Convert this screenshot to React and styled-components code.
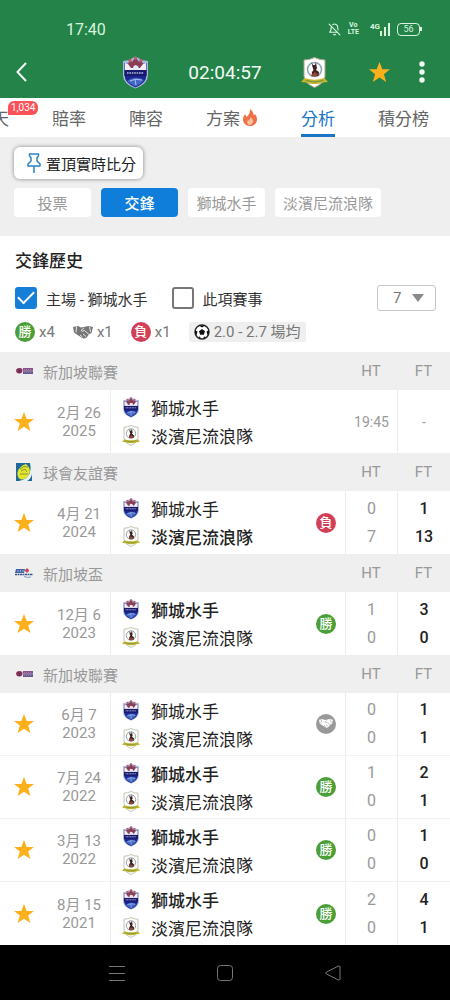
import { LuBellOff } from "react-icons/lu";
import styled, { createGlobalStyle } from "styled-components";

const GlobalStyle = createGlobalStyle`
  * {
    box-sizing: border-box;
  }
  body {
    margin: 0;
    background: white;
    font-family: Roboto, "Noto Sans CJK TC", sans-serif;
    font-size: 15px;
    color: #222;
  }
  button, select, input {
    font: inherit;
    color: inherit;
    margin: 0;
    padding: 0;
    border: none;
    background: none;
  }
  button {
    cursor: pointer;
  }
  svg {
    display: block;
    flex-shrink: 0;
  }
`

const Page = styled.div`
  display: flex;
  flex-direction: column;
  min-height: 100vh;
`

const Header = styled.header`
  background: #238349;
  color: #f3fbf5;
`

const StatusBar = styled.div`
  display: flex;
  align-items: center;
  justify-content: space-between;
  height: 46px;
  padding: 12px 28px 0 66px;
  font-size: 16px;
  color: #d9f5df;
`

const StatusIcons = styled.div`
  display: flex;
  align-items: center;
  gap: 7px;
`

const Volte = styled.span`
  display: flex;
  flex-direction: column;
  align-items: center;
  font-size: 7px;
  line-height: 7px;
  font-weight: 700;
`

const Signal = styled.span`
  display: flex;
  align-items: flex-start;
  padding-left: 4px;
  font-size: 8px;
  line-height: 7px;
  font-weight: 700;
`

const Bars = styled.span`
  display: flex;
  align-items: flex-end;
  gap: 2px;
  height: 13px;
`

const Bar = styled.i`
  width: 2px;
  height: ${({ $height }) => $height}px;
  background: currentColor;
`

const Battery = styled.span`
  display: flex;
  align-items: center;
  &::after {
    content: "";
    width: 2px;
    height: 4px;
    background: currentColor;
  }
`

const BatteryLevel = styled.span`
  width: 23px;
  height: 13px;
  border: 1px solid currentColor;
  border-radius: 4px;
  font-size: 9px;
  line-height: 11px;
  text-align: center;
`

const AppBar = styled.div`
  display: grid;
  grid-template-columns: 1fr auto 1fr;
  align-items: center;
  column-gap: 39px;
  height: 52px;
  padding: 0 16px;
`

const BarSide = styled.div`
  display: flex;
  align-items: center;
  justify-content: space-between;
`

const BarActions = styled.div`
  display: flex;
  gap: 19px;
`

const IconButton = styled.button`
  display: flex;
  align-items: center;
  justify-content: center;
  width: ${({ $narrow }) => ($narrow ? "12px" : "24px")};
  height: 24px;
`

const Clock = styled.div`
  font-size: 19px;
`

const Tabs = styled.nav`
  display: flex;
  justify-content: flex-end;
  gap: 43px;
  height: 39px;
  padding-right: 21px;
  overflow: hidden;
  background: white;
`

const Tab = styled.button`
  display: flex;
  align-items: center;
  gap: 2px;
  flex-shrink: 0;
  position: relative;
  font-size: 17px;
  padding-top: 3px;
  border-bottom: 3px solid ${({ $active }) => ($active ? "#1c75c4" : "transparent")};
  color: ${({ $active }) => ($active ? "#1c75c4" : "#666")};
`

const Count = styled.span`
  position: absolute;
  top: 3px;
  left: 33px;
  height: 14px;
  padding: 0 3px;
  border-radius: 6px 6px 6px 0;
  background: #fb5158;
  color: white;
  font-size: 10px;
  line-height: 14px;
`

const Filters = styled.section`
  display: flex;
  flex-direction: column;
  align-items: flex-start;
  gap: 9px;
  padding: 10px 14px 19px;
  background: #efefef;
`

const PinButton = styled.button`
  display: flex;
  align-items: center;
  gap: 5px;
  height: 32px;
  padding: 0 7px 0 13px;
  border-radius: 6px;
  background: white;
  box-shadow: 0 0 4px rgb(0 0 0 / 45%);
`

const Chips = styled.div`
  display: flex;
  gap: 10px;
`

const Chip = styled.button`
  min-width: 77px;
  height: 29px;
  padding: 0 8px;
  border-radius: 4px;
  background: ${({ $active }) => ($active ? "#0f7edb" : "white")};
  color: ${({ $active }) => ($active ? "white" : "#999")};
  font-weight: ${({ $active }) => ($active ? 500 : 400)};
`

const Summary = styled.section`
  padding: 14px 14px 10px 15px;
`

const Title = styled.h2`
  margin: 0 0 13px;
  font-size: 17px;
  line-height: 22px;
  font-weight: 500;
`

const Options = styled.div`
  display: flex;
  align-items: center;
  gap: 24px;
  height: 26px;
  margin-bottom: 11px;
`

const CheckLabel = styled.label`
  display: flex;
  align-items: center;
  gap: 9px;
  color: #333;
`

const Checkbox = styled.input`
  appearance: none;
  display: grid;
  place-items: center;
  width: 22px;
  height: 22px;
  border: 2px solid #777;
  border-radius: 3px;
  &:checked {
    border-color: #157fd8;
    background: #157fd8;
  }
  &:checked::after {
    content: "";
    width: 14px;
    height: 7px;
    margin-bottom: 5px;
    border-left: 2px solid white;
    border-bottom: 2px solid white;
    transform: rotate(-45deg);
  }
`

const SelectBox = styled.div`
  display: grid;
  grid-template-columns: 1fr 24px;
  align-items: center;
  margin-left: auto;
  width: 59px;
  select {
    grid-area: 1 / 1 / 2 / 3;
    appearance: none;
    height: 26px;
    padding-left: 15px;
    border: 1px solid #c6c6c6;
    border-radius: 3px;
    color: #777;
  }
  svg {
    grid-area: 1 / 2 / 2 / 3;
    pointer-events: none;
  }
`

const Legend = styled.div`
  display: flex;
  align-items: center;
  gap: 18px;
  height: 20px;
  line-height: 20px;
  color: #777;
`

const LegendItem = styled.span`
  display: flex;
  align-items: center;
  gap: 4px;
`

const Average = styled.span`
  display: flex;
  align-items: center;
  gap: 4px;
  height: 20px;
  line-height: 18px;
  padding: 0 5px;
  border-radius: 2px;
  background: #efefef;
`

const badgeColors = {
  win: "#4b9f38",
  loss: "#d23f57",
  draw: "#999",
}

const Badge = styled.span`
  display: inline-flex;
  align-items: center;
  justify-content: center;
  width: 20px;
  height: 20px;
  border-radius: 50%;
  vertical-align: middle;
  background: ${({ $result }) => badgeColors[$result]};
  color: white;
  font-size: 13px;
  line-height: 20px;
  font-weight: 500;
`

const Matches = styled.table`
  width: 100%;
  table-layout: fixed;
  border-spacing: 0;
  td, th {
    padding: 0;
  }
`

const LeagueRow = styled.tr`
  height: 38px;
  background: #efefef;
  color: #999;
  th {
    font-weight: 400;
  }
`

const League = styled.div`
  display: flex;
  align-items: center;
  gap: 9px;
  padding-left: 15px;
`

const MatchRow = styled.tr`
  height: 63px;
  td {
    text-align: center;
    border-bottom: ${({ $last }) => ($last ? "none" : "1px solid #f2f2f2")};
  }
`

const StarButton = styled(IconButton)`
  margin: 0 auto;
`

const DateCell = styled.td`
  line-height: 18px;
  color: #999;
`

const TeamsCell = styled.td`
  && {
    border-left: 1px solid #ececec;
  }
`

const Team = styled.div`
  display: flex;
  align-items: center;
  gap: 11px;
  height: 28px;
  padding-left: 11px;
  font-size: 17px;
  font-weight: ${({ $winner }) => ($winner ? 500 : 400)};
`

const ScoreCell = styled.td`
  font-size: ${({ $small }) => ($small ? "14px" : "16px")};
  font-weight: ${({ $strong }) => ($strong ? 500 : 400)};
  color: ${({ $strong }) => ($strong ? "#222" : "#999")};
  line-height: 28px;
  && {
    border-left: 1px solid ${({ $open }) => ($open ? "transparent" : "#ececec")};
  }
`

const SystemNav = styled.footer`
  display: flex;
  align-items: center;
  justify-content: center;
  gap: 84px;
  height: 55px;
  margin-top: auto;
  background: black;
`

const Star = ({ size = 20 }) => (
  <svg width={size} height={size} viewBox="0 0 20 20" fill="#fcb01c">
    <path d="M10 0l2.700 7H20l-5.800 4.600L16.400 19 10 14.800 3.600 19l2.200-7.400L0 7h7.300z" />
  </svg>
)

const Handshake = ({ width = 20, gap = "white" }) => (
  <svg width={width} height={width * 0.65} viewBox="0 0 20 13">
    <path d="M0 1l5-1 3 1.500L11 1l4-1 5 1-1.500 6-2 1-3 3.500q-2.500 2-5 0L3 8 1 6.500z" fill="currentColor" />
    <path d="M3.500.5L3 6.500M16.500 1l1 5M11 2L8 4.500q1 1.500 3.500 0L16 8.500M10 8l3 2.500M7 9l2.500 2" stroke={gap} strokeWidth=".8" fill="none" />
  </svg>
)

const Ball = () => (
  <svg width="16" height="16" viewBox="0 0 16 16">
    <circle cx="8" cy="8" r="7" fill="white" stroke="#222" strokeWidth="1.400" />
    <path d="M8 5l3 2.200-1.200 3.500H6.200L5 7.200z" fill="#111" />
    <path d="M5 1.500h6L8 3.500zM1 6l2.500 1.500-1 3.500L1 9.500zM15 6l-2.500 1.500 1 3.500L15 9.500zM4 13l2-.5 1 2.500zM12 13l-2-.5L9 15z" fill="#111" />
  </svg>
)

const SailorsCrest = ({ width = 18, height = 21 }) => (
  <svg width={width} height={height} viewBox="0 0 27 33">
    <path d="M1 5l6-1 6.500-3.500L20 4l6 1v14q0 9-12.500 13.500Q1 28 1 19z" fill="#a9b9df" />
    <path d="M2.500 7h22v12q0 8-11 12.500Q2.500 27 2.500 19z" fill="#1c2590" />
    <path d="M3 7l5 1 5 6H3z" fill="#f3edf4" />
    <path d="M24 7l-5 1-5 6h10z" fill="#f3edf4" />
    <path d="M6 8l2-4 2 2 3.500-5L17 6l2-2 2 4-3 4H9z" fill="#8a3f55" />
    <circle cx="8" cy="4.500" r="1.700" fill="#b8606b" />
    <circle cx="13.500" cy="2" r="1.700" fill="#b8606b" />
    <circle cx="19" cy="4.500" r="1.700" fill="#b8606b" />
    <path d="M11 11l2-2 3 1 1 3-3 2-2-1z" fill="#e5eafa" />
    <path d="M2.500 14h22v6h-22z" fill="#171a6b" />
    <path d="M5 17h17" stroke="#b3bae6" strokeWidth="1.500" strokeDasharray="1.600 .8" />
    <path d="M5 25q8-6 17-1l-4 4-4.500 2.500L9 28z" fill="#4468c4" />
    <path d="M8 25q5-3 12-1M13 23l1 6" stroke="#a7c0ef" fill="none" />
  </svg>
)

const RoversCrest = ({ width = 18, height = 21 }) => (
  <svg width={width} height={height} viewBox="0 0 27 31">
    <path d="M3 3q5 0 10.500-2.500Q19 3 24 3v16q0 7-10.500 11.500Q3 26 3 19z" fill="#fdfdf9" stroke="#a9a793" />
    <circle cx="13.500" cy="12.500" r="7" fill="none" stroke="#8fa1b3" strokeWidth="1.500" />
    <path d="M10.500 5l1.500 3h2l1-3 .5 4 .5 2-1 2 3 2-.5 4h-7l.5-4 1.500-2-1-3z" fill="#3d211f" />
    <path d="M11 17l3-2 3 2-1.500 2.500h-4z" fill="#96413a" />
    <path d="M0 25l3.500-4q10 3.500 20 0l3.500 4-5 .5q-8.500 3-17 0z" fill="#c3b52d" />
    <path d="M5 23.500q8.500 3 17 0" stroke="#6b9245" fill="none" />
  </svg>
)

const PremierLogo = () => (
  <svg width="19" height="8" viewBox="0 0 19 8">
    <path d="M1 4q0-3 3.500-3Q8 1 7.500 4 7 7 4 6.500L2 6z" fill="#873458" />
    <path d="M3 2l2 2-1 2" stroke="#51275f" fill="none" />
    <path d="M8 1h10v2.800H8z" fill="#85518a" />
    <path d="M8 4.200h10V7H8z" fill="#62558b" />
    <path d="M9 2.400h8M9 5.600h8" stroke="#c6a9c5" strokeWidth=".5" strokeDasharray="1 1" />
  </svg>
)

const FriendlyLogo = () => (
  <svg width="19" height="20" viewBox="0 0 19 20">
    <path d="M1 1h16v18H1z" fill="#1f6898" />
    <path d="M4 19q14-3 11-18h2v11q-1 5-5 7z" fill="#e9f2f3" />
    <path d="M11 2q5 4 3.500 9-2 6-8.500 6.500-4-1.500-3.500-7Q4 4 11 2z" fill="#e6e52c" />
    <path d="M5 7q4-4 8-2M5 12h8M6 9l4-2 2 3" stroke="#7e9c3d" fill="none" />
  </svg>
)

const CupLogo = () => (
  <svg width="19" height="10" viewBox="0 0 19 10">
    <path d="M1 1h9l-1 4H0z" fill="#4264a3" />
    <path d="M3 2v2M5.500 2v2M8 2v2" stroke="#b2c3df" strokeWidth=".8" />
    <path d="M12 .5v4M10 2.500h4" stroke="#d34459" strokeWidth="2" />
    <path d="M0 6.500h18" stroke="#36548f" strokeWidth="1.500" strokeDasharray="2 .5" />
    <path d="M9 8.500q3 1.500 7 .5" stroke="#7e97c2" fill="none" />
  </svg>
)

const leagueLogos = {
  premier: PremierLogo,
  friendly: FriendlyLogo,
  cup: CupLogo,
}

const HOME = "獅城水手"
const AWAY = "淡濱尼流浪隊"

const groups = [
  {
    league: "新加坡聯賽",
    logo: "premier",
    matches: [{ day: "2月 26", year: "2025", kickoff: "19:45" }],
  },
  {
    league: "球會友誼賽",
    logo: "friendly",
    matches: [{ day: "4月 21", year: "2024", ht: [0, 7], ft: [1, 13], result: "loss" }],
  },
  {
    league: "新加坡盃",
    logo: "cup",
    matches: [{ day: "12月 6", year: "2023", ht: [1, 0], ft: [3, 0], result: "win" }],
  },
  {
    league: "新加坡聯賽",
    logo: "premier",
    matches: [
      { day: "6月 7", year: "2023", ht: [0, 0], ft: [1, 1], result: "draw" },
      { day: "7月 24", year: "2022", ht: [1, 0], ft: [2, 1], result: "win" },
      { day: "3月 13", year: "2022", ht: [0, 0], ft: [1, 0], result: "win" },
      { day: "8月 15", year: "2021", ht: [2, 0], ft: [4, 1], result: "win" },
    ],
  },
]

function ResultBadge({ result }) {
  return (
    <Badge $result={result}>
      {result === "win" && "勝"}
      {result === "loss" && "負"}
      {result === "draw" && <Handshake width={14} gap="#999" />}
    </Badge>
  )
}

function Match({ match, last }) {
  const { day, year, kickoff, ht, ft, result } = match
  return (
    <MatchRow $last={last}>
      <td>
        <StarButton type="button" aria-label="收藏"><Star /></StarButton>
      </td>
      <DateCell>{day}<br/>{year}</DateCell>
      <TeamsCell>
        <Team $winner={result === "win"}><SailorsCrest />{HOME}</Team>
        <Team $winner={result === "loss"}><RoversCrest />{AWAY}</Team>
      </TeamsCell>
      <td>{result && <ResultBadge result={result} />}</td>
      <ScoreCell $small={!!kickoff} $open={!!kickoff}>
        {kickoff ? kickoff : <>{ht[0]}<br/>{ht[1]}</>}
      </ScoreCell>
      <ScoreCell $small={!!kickoff} $strong={!kickoff}>
        {kickoff ? "-" : <>{ft[0]}<br/>{ft[1]}</>}
      </ScoreCell>
    </MatchRow>
  )
}

function LeagueGroup({ group }) {
  const Logo = leagueLogos[group.logo]
  return (
    <tbody>
      <LeagueRow>
        <th colSpan={4} scope="colgroup">
          <League><Logo />{group.league}</League>
        </th>
        <th scope="col">HT</th>
        <th scope="col">FT</th>
      </LeagueRow>
      {group.matches.map((match, i) => (
        <Match key={match.day + match.year} match={match} last={i === group.matches.length - 1} />
      ))}
    </tbody>
  )
}

const Column = styled.col`
  width: ${({ $width }) => $width}px;
`

export default function App() {
  return (
    <Page>
      <GlobalStyle />
      <Header>
        <StatusBar>
          <span>17:40</span>
          <StatusIcons>
            <LuBellOff size={13} />
            <Volte><span>Vo</span><span>LTE</span></Volte>
            <Signal>
              4G
              <Bars>
                <Bar $height={5} />
                <Bar $height={9} />
                <Bar $height={13} />
              </Bars>
            </Signal>
            <Battery><BatteryLevel>56</BatteryLevel></Battery>
          </StatusIcons>
        </StatusBar>
        <AppBar>
          <BarSide>
            <IconButton $narrow type="button" aria-label="返回">
              <svg width="12" height="20" viewBox="0 0 12 20" fill="none" stroke="currentColor" strokeWidth="2">
                <path d="M10 1L1.500 10l8.500 9" />
              </svg>
            </IconButton>
            <SailorsCrest width={27} height={33} />
          </BarSide>
          <Clock>02:04:57</Clock>
          <BarSide>
            <RoversCrest width={27} height={31} />
            <BarActions>
              <IconButton type="button" aria-label="收藏"><Star size={21} /></IconButton>
              <IconButton type="button" aria-label="更多">
                <svg width="6" height="22" viewBox="0 0 6 22" fill="currentColor">
                  <circle cx="3" cy="3" r="2.700" />
                  <circle cx="3" cy="11" r="2.700" />
                  <circle cx="3" cy="19" r="2.700" />
                </svg>
              </IconButton>
            </BarActions>
          </BarSide>
        </AppBar>
      </Header>

      <Tabs>
        <Tab type="button">聊天<Count>1,034</Count></Tab>
        <Tab type="button">賠率</Tab>
        <Tab type="button">陣容</Tab>
        <Tab type="button">
          方案
          <svg width="16" height="17" viewBox="0 0 16 17">
            <path d="M8 0q4 3 3.500 6.500L13 5q3 4 1.500 8-2 4-6.500 4t-6.500-4Q0 9 3 5l1.500 3Q8.500 5 8 0z" fill="#ef7048" />
            <path d="M8.500 8q3 2.500 2.500 5-1 3-3 3t-3-2.500Q5 11 7 11q1.500-1 1.500-3z" fill="#fbc39b" />
          </svg>
        </Tab>
        <Tab type="button" $active>分析</Tab>
        <Tab type="button">積分榜</Tab>
      </Tabs>

      <Filters>
        <PinButton type="button">
          <svg width="14" height="20" viewBox="0 0 14 20" fill="none" stroke="#2b83c6" strokeWidth="1.500" strokeLinejoin="round">
            <path d="M2.500 1h9v2L10 4.500V8l3 3v2H1v-2l3-3V4.500L2.500 3zM7 13v7" />
          </svg>
          置頂實時比分
        </PinButton>
        <Chips>
          <Chip type="button">投票</Chip>
          <Chip type="button" $active>交鋒</Chip>
          <Chip type="button">{HOME}</Chip>
          <Chip type="button">{AWAY}</Chip>
        </Chips>
      </Filters>

      <Summary>
        <Title>交鋒歷史</Title>
        <Options>
          <CheckLabel><Checkbox type="checkbox" defaultChecked />主場 - {HOME}</CheckLabel>
          <CheckLabel><Checkbox type="checkbox" />此項賽事</CheckLabel>
          <SelectBox>
            <select aria-label="場數" defaultValue="7">
              <option>7</option>
            </select>
            <svg width="12" height="8" viewBox="0 0 12 8" fill="#8a8a8a"><path d="M0 0h12L6 8z" /></svg>
          </SelectBox>
        </Options>
        <Legend>
          <LegendItem><ResultBadge result="win" />x4</LegendItem>
          <LegendItem><Handshake />x1</LegendItem>
          <LegendItem><ResultBadge result="loss" />x1</LegendItem>
          <Average><Ball />2.0 - 2.7 場均</Average>
        </Legend>
      </Summary>

      <Matches>
        <colgroup>
          <Column $width={48} />
          <Column $width={62} />
          <col />
          <Column $width={38} />
          <Column $width={52} />
          <Column $width={53} />
        </colgroup>
        {groups.map((group, i) => (
          <LeagueGroup key={i} group={group} />
        ))}
      </Matches>

      <SystemNav>
        <IconButton type="button" aria-label="選單">
          <svg width="16" height="16" viewBox="0 0 16 16" stroke="#777"><path d="M0 1.500h16M0 8.500h16M0 15.500h16" /></svg>
        </IconButton>
        <IconButton type="button" aria-label="主頁">
          <svg width="16" height="16" viewBox="0 0 16 16" fill="none" stroke="#777"><rect x=".5" y=".5" width="15" height="15" rx="3" /></svg>
        </IconButton>
        <IconButton type="button" aria-label="後退">
          <svg width="16" height="16" viewBox="0 0 16 16" fill="none" stroke="#777" strokeLinejoin="round"><path d="M13.500 1Q15 .5 15 2v12q0 1.500-1.500 1L1.500 9q-1.500-1 0-2z" /></svg>
        </IconButton>
      </SystemNav>
    </Page>
  )
}
